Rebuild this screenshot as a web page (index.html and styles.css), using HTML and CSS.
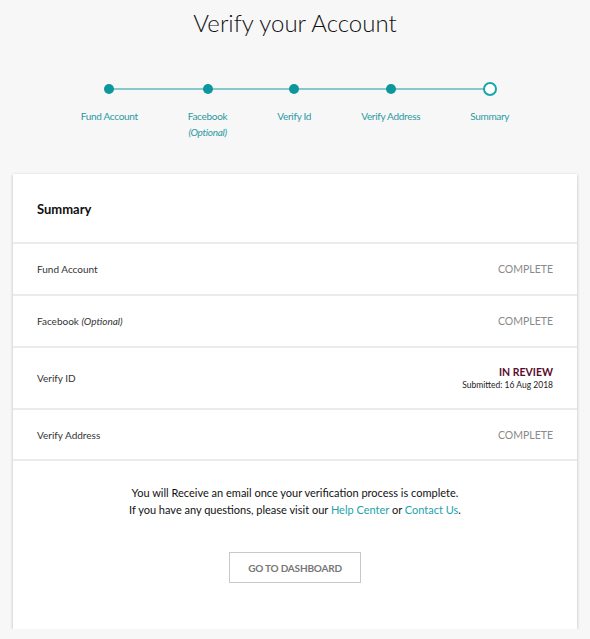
FILE: index.html
```html
<!DOCTYPE html>
<html>
<head>
<meta charset="utf-8">
<link rel="stylesheet" href="styles.css">
</head>
<body>
<h1 class="title">Verify your Account</h1>
<div class="stepper">
  <div class="step done"><span class="dot"></span><span class="label">Fund Account</span></div>
  <div class="step done"><span class="dot"></span><span class="label">Facebook<br><i>(Optional)</i></span></div>
  <div class="step done"><span class="dot"></span><span class="label">Verify Id</span></div>
  <div class="step done"><span class="dot"></span><span class="label">Verify Address</span></div>
  <div class="step current"><span class="dot"></span><span class="label">Summary</span></div>
</div>
<div class="card">
  <div class="card-head">Summary</div>
  <div class="row"><span class="name">Fund Account</span><span class="status">COMPLETE</span></div>
  <div class="row"><span class="name">Facebook <i>(Optional)</i></span><span class="status">COMPLETE</span></div>
  <div class="row tall"><span class="name">Verify ID</span><span class="status-col"><span class="review">IN REVIEW</span><span class="submitted">Submitted: 16 Aug 2018</span></span></div>
  <div class="row"><span class="name">Verify Address</span><span class="status">COMPLETE</span></div>
  <div class="card-foot">
    <p class="note">You will Receive an email once your verification process is complete.<br>If you have any questions, please visit our <a href="#">Help Center</a> or <a href="#">Contact Us</a>.</p>
    <button class="btn">GO TO DASHBOARD</button>
  </div>
</div>
</body>
</html>
```
FILE: styles.css
```css
* { box-sizing: border-box; }
body {
  margin: 0;
  background: #f7f7f7;
  font-family: Lato, "Liberation Sans", sans-serif;
  color: #222;
}
.title {
  margin: 0;
  padding-top: 6px;
  text-align: center;
  font-weight: 300;
  font-size: 24px;
  line-height: 34px;
  color: #111;
}
.stepper {
  display: flex;
  justify-content: center;
  gap: 50px;
  margin-top: 42px;
  height: 92px;
}
.step {
  position: relative;
  display: flex;
  flex-direction: column;
  align-items: center;
}
.step::before, .step::after {
  content: "";
  position: absolute;
  top: 6px;
  height: 2px;
  background: #86c8cc;
}
.step::before { left: -25px; right: 50%; }
.step::after { left: 50%; right: -25px; }
.step:first-child::before, .step:last-child::after { display: none; }
.dot {
  position: relative;
  z-index: 1;
  width: 10px;
  height: 10px;
  margin-top: 2px;
  border-radius: 50%;
  background: #0b979c;
}
.current .dot {
  width: 14px;
  height: 14px;
  margin-top: 0;
  background: #fff;
  border: 2px solid #18a5ab;
}
.label {
  margin-top: 14px;
  font-size: 10px;
  line-height: 16px;
  color: #2a9aa3;
  text-align: center;
  letter-spacing: -0.3px;
}
.current .label { margin-top: 12px; }
.card {
  margin: 0 13px;
  background: #fff;
  box-shadow: 0 1px 3px rgba(0,0,0,0.25);
}
.card-head {
  height: 70px;
  padding: 27px 24px 0;
  font-size: 13px;
  font-weight: 700;
  color: #111;
  border-bottom: 2px solid #ebebeb;
}
.row {
  display: flex;
  justify-content: space-between;
  align-items: center;
  height: 52px;
  padding: 0 24px;
  border-bottom: 2px solid #ebebeb;
  font-size: 10px;
}
.row.tall { height: 62px; }
.row:nth-child(5) { height: 51px; }
.name { color: #333; }
.status { color: #8a8a8a; font-size: 10.5px; }
.status-col { display: flex; flex-direction: column; align-items: flex-end; }
.review { color: #5a0b2e; font-weight: 700; font-size: 10.5px; }
.submitted { font-size: 8.5px; color: #222; margin-top: 2px; }
.card-foot {
  display: flex;
  flex-direction: column;
  align-items: center;
  padding: 23px 0 46px;
}
.note {
  margin: 0;
  font-size: 11px;
  line-height: 17px;
  text-align: center;
  color: #111;
}
.note a { color: #1ea3ab; text-decoration: none; }
.btn {
  margin-top: 34px;
  width: 132px;
  height: 31px;
  background: #fff;
  border: 1px solid #c8c8c8;
  font-family: inherit;
  font-size: 10px;
  font-weight: 700;
  letter-spacing: -0.2px;
  color: #777;
}
```
